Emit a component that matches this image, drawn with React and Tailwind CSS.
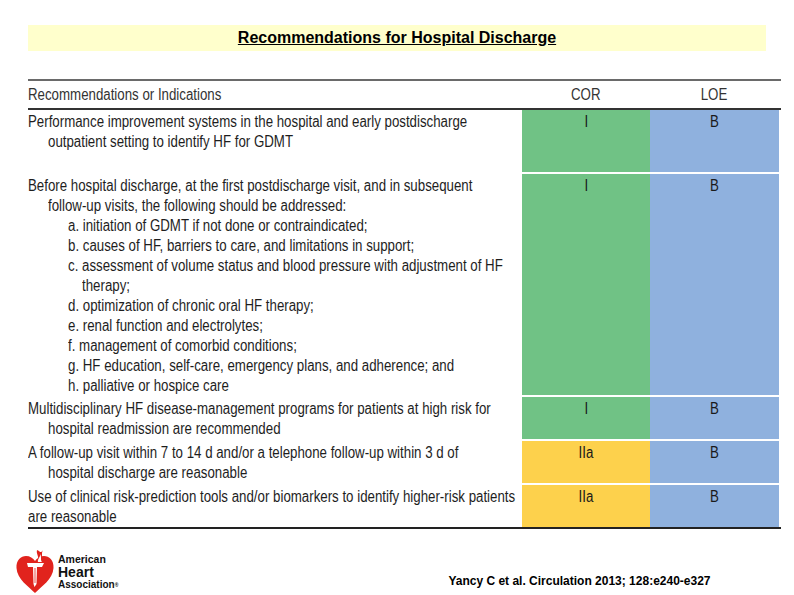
import React from "react";

const sans = { fontFamily: '"Liberation Sans", Arial, sans-serif' };

function L({ children, ml = 0 }) {
  return (
    <div className="whitespace-nowrap" style={{ marginLeft: ml }}>
      <span className="inline-block origin-left scale-x-[0.83]">{children}</span>
    </div>
  );
}

function C({ children }) {
  return <span className="inline-block origin-center scale-x-[0.83]">{children}</span>;
}

function Cells({ cor, loe, color, h, last }) {
  const border = last ? "" : "border-b-2 border-white";
  return (
    <>
      <div className={`${color} ${border} flex justify-center pt-[2px] text-[16px] leading-[20px] text-[#1a1a1a]`} style={{ ...sans, height: h }}>
        <C>{cor}</C>
      </div>
      <div className={`bg-[#8fb1de] ${border} flex justify-center pt-[2px] text-[16px] leading-[20px] text-[#1a1a1a]`} style={{ ...sans, height: h }}>
        <C>{loe}</C>
      </div>
      <div />
    </>
  );
}

function Txt({ children, h }) {
  return (
    <div className="pt-[2px] text-[16px] leading-[20px] text-[#1e1e1e] overflow-hidden" style={{ ...sans, height: h }}>
      {children}
    </div>
  );
}

function Logo() {
  return (
    <svg width="40" height="46" viewBox="0 0 40 46">
      <path
        d="M20 45 C14 39 2 31 1.5 20 C1 12 6 8 11 8 C15 8 18 10 20 13 C22 10 25 8 29 8 C34 8 39 12 38.5 20 C38 31 26 39 20 45 Z"
        fill="#e1231d"
      />
      <path d="M22 2 C21 6 24 8 23 12 L26 11 C28 8 26 5 28 2 C27 4 25 5 24 3 Z" fill="#e1231d" />
      <path d="M23 14 C22 11 26 9 25 6 C27 9 25 12 27 14 Z" fill="#fff" />
      <path d="M12 15 L29 15 L27 19 L22 19 L21.5 36 L19.5 39 L18.5 36 L18 19 L13 19 Z" fill="#fff" />
      <path d="M19.6 20 L19.6 35 L20.4 35 L20.4 20 Z" fill="#e1231d" />
    </svg>
  );
}

export default function App() {
  return (
    <div className="w-[794px] h-[595px] bg-white relative overflow-hidden flex flex-col">
      <div className="mt-[25px] ml-[28px] w-[738px] h-[26px] bg-[#ffffcc] flex justify-center items-center">
        <span className="underline text-[16px] font-bold text-black" style={sans}>
          Recommendations for Hospital Discharge
        </span>
      </div>

      <div className="ml-[28px] mt-[28px] w-[753px] border-t-2 border-[#6a6a6a]">
        <div className="grid grid-cols-[494px_128px_129px_2px] h-[27px] items-center text-[16px] text-[#333]" style={sans}>
          <L>Recommendations or Indications</L>
          <div className="text-center"><C>COR</C></div>
          <div className="text-center"><C>LOE</C></div>
          <div />
        </div>
        <div className="border-t-2 border-[#333]" />
        <div className="grid grid-cols-[494px_128px_129px_2px]">
          <Txt h={64}>
            <L>Performance improvement systems in the hospital and early postdischarge</L>
            <L ml={20}>outpatient setting to identify HF for GDMT</L>
          </Txt>
          <Cells cor="I" loe="B" color="bg-[#70c285]" h={64} />

          <Txt h={223}>
            <L>Before hospital discharge, at the first postdischarge visit, and in subsequent</L>
            <L ml={20}>follow-up visits, the following should be addressed:</L>
            <L ml={40}>a. initiation of GDMT if not done or contraindicated;</L>
            <L ml={40}>b. causes of HF, barriers to care, and limitations in support;</L>
            <L ml={40}>c. assessment of volume status and blood pressure with adjustment of HF</L>
            <L ml={54}>therapy;</L>
            <L ml={40}>d. optimization of chronic oral HF therapy;</L>
            <L ml={40}>e. renal function and electrolytes;</L>
            <L ml={40}>f. management of comorbid conditions;</L>
            <L ml={40}>g. HF education, self-care, emergency plans, and adherence; and</L>
            <L ml={40}>h. palliative or hospice care</L>
          </Txt>
          <Cells cor="I" loe="B" color="bg-[#70c285]" h={223} />

          <Txt h={44}>
            <L>Multidisciplinary HF disease-management programs for patients at high risk for</L>
            <L ml={20}>hospital readmission are recommended</L>
          </Txt>
          <Cells cor="I" loe="B" color="bg-[#70c285]" h={44} />

          <Txt h={44}>
            <L>A follow-up visit within 7 to 14 d and/or a telephone follow-up within 3 d of</L>
            <L ml={20}>hospital discharge are reasonable</L>
          </Txt>
          <Cells cor="IIa" loe="B" color="bg-[#fdd14c]" h={44} />

          <Txt h={42}>
            <L>Use of clinical risk-prediction tools and/or biomarkers to identify higher-risk patients</L>
            <L>are reasonable</L>
          </Txt>
          <Cells cor="IIa" loe="B" color="bg-[#fdd14c]" h={42} last />
        </div>
        <div className="border-t-2 border-[#222]" />
      </div>

      <div className="flex items-end mt-[19px] ml-[15px] w-[779px]">
        <Logo />
        <div className="ml-[3px] mb-[3px] flex flex-col text-[#111] font-bold" style={sans}>
          <span className="text-[10.5px] leading-[11px]">American</span>
          <span className="text-[14px] leading-[14px]">Heart</span>
          <span className="text-[10px] leading-[11px]">
            Association<span className="text-[5px] align-middle">®</span>
          </span>
        </div>
        <div className="ml-[330px] mb-[4px] text-[12px] font-bold text-black" style={sans}>
          Yancy C et al. Circulation 2013; 128:e240-e327
        </div>
      </div>
    </div>
  );
}
